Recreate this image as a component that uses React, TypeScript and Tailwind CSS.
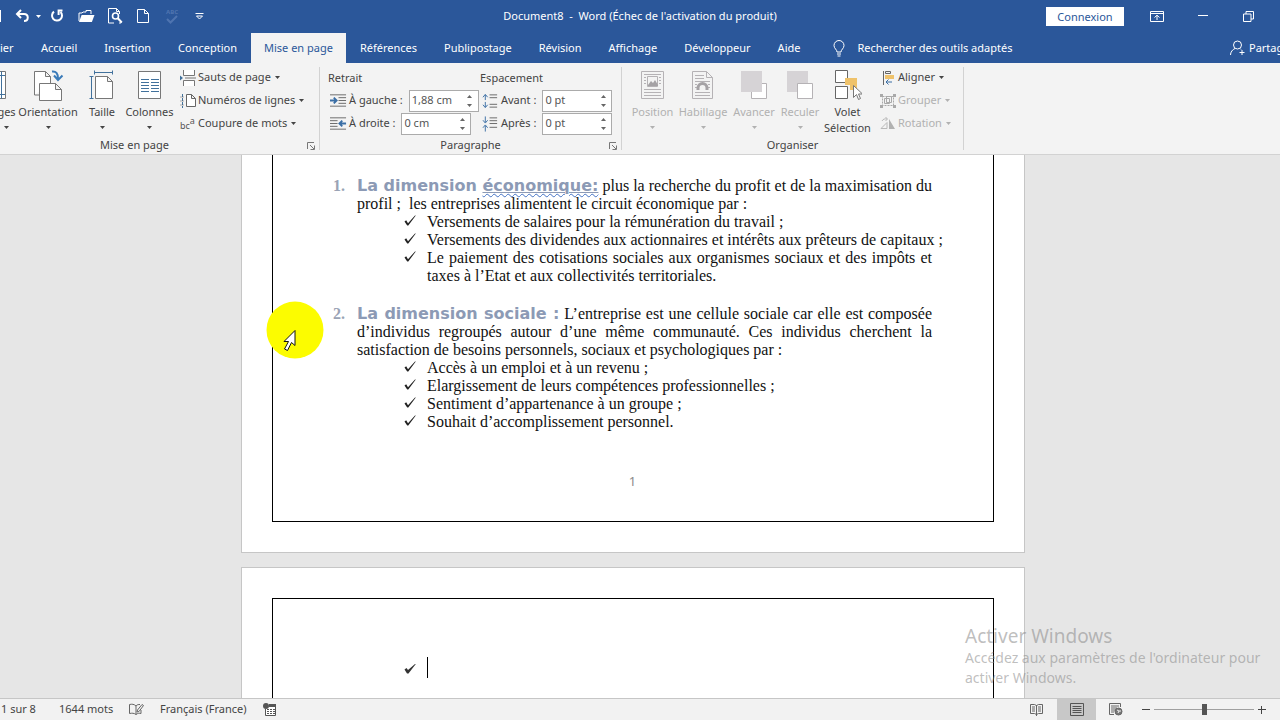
import { useState } from 'react';
import type { ReactNode } from 'react';

const TABS = [
  'Accueil',
  'Insertion',
  'Conception',
  'Mise en page',
  'Références',
  'Publipostage',
  'Révision',
  'Affichage',
  'Développeur',
  'Aide',
];

function Caret({ className = '' }: { className?: string }) {
  return (
    <svg viewBox="0 0 5 3" className={`h-[3px] w-[5px] shrink-0 fill-current ${className}`} aria-hidden="true">
      <path d="M0 0h5L2.5 3z" />
    </svg>
  );
}

/* ---------- Title bar ---------- */

function QuickAccess() {
  return (
    <div className="flex h-8 items-center text-white">
      <span className="h-3 w-px bg-white" />
      <button aria-label="Annuler" className="ml-[14px] flex items-center gap-[6px]">
        <svg viewBox="0 0 15 14" className="h-[14px] w-[15px] fill-none stroke-current stroke-2">
          <path d="M6 1 2 5l4 4M2 5h7c5 0 5 7 0 7" />
        </svg>
        <Caret />
      </button>
      <button aria-label="Rétablir" className="ml-[9px]">
        <svg viewBox="0 0 14 14" className="h-[14px] w-[14px] fill-none stroke-current stroke-2">
          <path d="M4 2.6A5 5 0 1 0 10.5 3M12.5 1.5H8.6v4.6" />
        </svg>
      </button>
      <button aria-label="Ouvrir" className="ml-[14px]">
        <svg viewBox="0 0 17 14" className="h-[14px] w-[17px]">
          <path d="M1 12V4h3l1-1h3V1.5h5V5" className="fill-none stroke-current" />
          <path d="M3.6 6H16.5l-2.6 7H1z" className="fill-current" />
        </svg>
      </button>
      <button aria-label="Aperçu" className="ml-[13px]">
        <svg viewBox="0 0 15 16" className="h-4 w-[15px] fill-none stroke-current">
          <path d="M6 15H.5V.5h8l3 3V6M8.5.5v3h3M13 13v2h-2" />
          <circle cx="7.5" cy="8" r="3" strokeWidth="1.6" />
          <path d="m9.8 10.3 4 4.2" strokeWidth="2" />
        </svg>
      </button>
      <button aria-label="Nouveau" className="ml-[14px]">
        <svg viewBox="0 0 12 14" className="h-[14px] w-3 fill-none stroke-current">
          <path d="M.5.5h7l4 4v9H.5zM7.5.5v4h4" />
        </svg>
      </button>
      <button aria-label="Grammaire" className="ml-4 text-[#4f74b0]">
        <span className="block text-[6px] leading-[6px] font-bold">ABC</span>
        <svg viewBox="0 0 14 9" className="h-[9px] w-[14px] fill-none stroke-current stroke-2">
          <path d="m2 4 3.5 3.5L12 1" />
        </svg>
      </button>
      <button aria-label="Personnaliser" className="ml-4">
        <svg viewBox="0 0 9 7" className="h-[7px] w-[9px] fill-none stroke-current">
          <path d="M.5.5h8M1.5 3l3 3 3-3z" />
        </svg>
      </button>
    </div>
  );
}

function TitleBar() {
  return (
    <div className="grid h-8 grid-cols-[1fr_auto_1fr] items-center text-white">
      <QuickAccess />
      <h1 className="text-[11px] whitespace-pre">Document8  -  Word (Échec de l'activation du produit)</h1>
      <div className="flex items-center justify-end pr-[26px]">
        <button className="h-[19px] w-[78px] bg-white text-[11px] leading-[19px] text-[#2b579a]">Connexion</button>
        <button aria-label="Options d'affichage du ruban" className="ml-[26px]">
          <svg viewBox="0 0 14 11" className="h-[11px] w-[14px] fill-none stroke-current">
            <path d="M.5.5h13v10H.5zM.5 2.5h13M7 9V4.5M4.5 6.5 7 4.2l2.5 2.3" />
          </svg>
        </button>
        <button aria-label="Réduire" className="ml-[34px]">
          <svg viewBox="0 0 10 10" className="h-[10px] w-[10px] stroke-current">
            <path d="M0 4.5h10" />
          </svg>
        </button>
        <button aria-label="Restaurer" className="ml-[35px]">
          <svg viewBox="0 0 11 11" className="h-[11px] w-[11px] fill-none stroke-current">
            <path d="M.5 3h7.5v7.5H.5zM3 3V.5h7.500V8H8" />
          </svg>
        </button>
      </div>
    </div>
  );
}

function TabBar({ active, onSelect }: { active: string; onSelect: (tab: string) => void }) {
  return (
    <div className="flex h-[31px] items-end overflow-hidden text-[11px] whitespace-nowrap text-white">
      <button className="h-[30px] w-7 text-left">ier</button>
      <div className="flex gap-px">
        {TABS.map(tab => (
          <button
            key={tab}
            onClick={() => onSelect(tab)}
            className={`h-[30px] px-[13px] ${tab === active ? 'bg-[#f3f3f3] text-[#2b579a]' : ''}`}
          >
            {tab}
          </button>
        ))}
      </div>
      <button className="ml-5 flex h-[30px] items-center gap-3">
        <svg viewBox="0 0 12 17" className="h-[17px] w-3 fill-none stroke-current">
          <path d="M4 12c0-2.500-3-3.500-3-6.500a5 5 0 0 1 10 0c0 3-3 4-3 6.500zM4 14h4M4.500 16h3" />
        </svg>
        Rechercher des outils adaptés
      </button>
      <button className="ml-auto flex h-[30px] items-center gap-1">
        <svg viewBox="0 0 15 16" className="h-4 w-[15px] fill-none stroke-current">
          <circle cx="7.500" cy="5" r="4" />
          <path d="M.5 15c0-3 2-5.500 4.500-6.500M10 8.500l1 1M12 10v5M9.500 12.500h5" />
        </svg>
        <span className="w-[31px] text-left">Partag</span>
      </button>
    </div>
  );
}

/* ---------- Ribbon ---------- */

function Group({ label, launcher, className, children }: { label: string; launcher?: boolean; className: string; children: ReactNode }) {
  return (
    <section className={`flex shrink-0 flex-col ${className}`}>
      <div className="flex h-[74px]">{children}</div>
      <div className="grid h-[17px] grid-cols-[1fr_auto_1fr] items-center text-[11px] text-[#444]">
        <span className="col-start-2">{label}</span>
        {launcher && (
          <button aria-label={`Options ${label}`} className="justify-self-end pr-1">
            <svg viewBox="0 0 8 8" className="h-2 w-2 fill-none stroke-[#777]">
              <path d="M.5 7V.5H7M3 3l4 4M7.500 3.500v4h-4" />
            </svg>
          </button>
        )}
      </div>
    </section>
  );
}

function Separator() {
  return <div className="my-1 w-px shrink-0 bg-[#d2d2d2]" />;
}

interface BigProps {
  label: string;
  secondLine?: string;
  icon: ReactNode;
  className: string;
  disabled?: boolean;
}

function BigButton({ label, secondLine, icon, className, disabled }: BigProps) {
  return (
    <button
      disabled={disabled}
      className={`flex shrink-0 flex-col items-center text-[11px] leading-4 whitespace-nowrap ${disabled ? 'text-[#b1b1b1]' : 'text-[#444]'} ${className}`}
    >
      <span className="mt-[6px] mb-[3px] flex h-8 items-center">{icon}</span>
      <span>{label}</span>
      {secondLine ? <span>{secondLine}</span> : <Caret className="mt-[6px]" />}
    </button>
  );
}

function SmallButton({ label, icon, disabled }: { label: string; icon: ReactNode; disabled?: boolean }) {
  return (
    <button
      disabled={disabled}
      className={`flex h-[23px] items-center text-[11px] whitespace-nowrap ${disabled ? 'text-[#b1b1b1]' : 'text-[#444]'}`}
    >
      {icon}
      <span className="mr-1 ml-[2px]">{label}</span>
      <Caret />
    </button>
  );
}

function SpinField({ id, label, icon, value }: { id: string; label: string; icon: ReactNode; value: string }) {
  const [text, setText] = useState(value);
  return (
    <div className="flex h-[23px] items-center text-[11px] text-[#444]">
      {icon}
      <label htmlFor={id} className="mr-[6px] ml-[2px] whitespace-nowrap">{label}</label>
      <div className="flex h-[22px] w-[70px] border border-[#ababab] bg-white">
        <input
          id={id}
          value={text}
          onChange={e => setText(e.target.value)}
          className="w-[52px] min-w-0 pl-[2px] text-[#555] outline-none"
        />
        <div className="flex flex-1 flex-col items-center justify-between py-1 text-[#666]">
          <button aria-label={`Augmenter ${label}`}>
            <Caret className="rotate-180" />
          </button>
          <button aria-label={`Diminuer ${label}`}>
            <Caret />
          </button>
        </div>
      </div>
    </div>
  );
}

function LayoutGroup() {
  return (
    /* the group starts beyond the left edge of the window */
    <Group label="Mise en page" launcher className="-ml-[50px] w-[369px]">
      <BigButton
        label="ges"
        className="ml-[50px] w-[13px]"
        icon={
          <svg viewBox="0 0 13 30" className="h-[30px] w-[13px] fill-white stroke-[#777]">
            <path d="M-5 1.500H5.500v27H-5" />
            <path d="M-5 5.500h10M-5 24.500h10M1.500 1.500v27" stroke="#41719c" />
          </svg>
        }
      />
      <BigButton
        label="Orientation"
        className="w-[70px]"
        icon={
          <svg viewBox="0 0 32 32" className="h-8 w-8 fill-white stroke-[#777]">
            <path d="M2.500 26V2.500h11l5 5V14M13.500 2.500v5h5M2.500 26H7" />
            <path d="M7.500 14.500h16l6 6v11h-22zM23.500 14.500v6h6" />
            <path d="M20 2.500c4-.5 6 2 6 7M22 6.500l4 4.500 4.500-4.500" className="fill-none stroke-[#3a7ab8] stroke-2" />
          </svg>
        }
      />
      <BigButton
        label="Taille"
        className="w-[38px]"
        icon={
          <svg viewBox="0 0 26 32" className="h-8 w-[26px] fill-white stroke-[#777]">
            <path d="M6.500 7.500h12l5 5v17h-17zM18.500 7.500v5h5" />
            <path d="M5 3.500h19M5.500 1.500v4M23.500 1.500v4M2.500 8v22M.5 7.500h4M.5 29.500h4" className="stroke-[#41719c]" />
          </svg>
        }
      />
      <BigButton
        label="Colonnes"
        className="w-[57px]"
        icon={
          <svg viewBox="0 0 24 30" className="h-[30px] w-6 fill-white stroke-[#777]">
            <path d="M.5 1.500h22v27H.5z" />
            <path
              d="M3 9.500h8M13 9.500h8M3 12.500h8M13 12.500h8M3 15.500h8M13 15.500h8M3 18.500h8M13 18.500h8M3 21.500h8M13 21.500h8"
              className="stroke-[#41719c]"
            />
          </svg>
        }
      />
      <div className="flex flex-col pt-[3px] pl-[2px]">
        <SmallButton
          label="Sauts de page"
          icon={
            <svg viewBox="0 0 16 16" className="h-4 w-4 fill-white stroke-[#777]">
              <path d="M3.500 0v5.500h11V0M3.500 16v-5.500h11V16" />
              <path d="M5 8h11" />
              <path d="M0 5.500 3 8l-3 2.500z" className="fill-[#41719c] stroke-none" />
            </svg>
          }
        />
        <SmallButton
          label="Numéros de lignes"
          icon={
            <svg viewBox="0 0 16 16" className="h-4 w-4 fill-white stroke-[#666]">
              <path d="M6.500 1.500h5l4 4v8h-9zM11.500 1.500v4h4" />
              <path d="M2.500 1v14" strokeDasharray="3 1" className="stroke-[#41719c]" />
              <path d="M.5 4h3M.5 8h3M.5 12h3" strokeDasharray="1 1" className="stroke-[#666]" />
            </svg>
          }
        />
        <SmallButton
          label="Coupure de mots"
          icon={
            <span className="flex h-4 w-4 text-[9px] text-[#555]">
              <span className="self-end leading-[12px]">bc</span>
              <span className="self-start leading-[10px]">a</span>
            </span>
          }
        />
      </div>
    </Group>
  );
}

function ParagraphGroup() {
  return (
    <Group label="Paragraphe" launcher className="w-[301px]">
      <div className="w-[160px] pt-[3px] pl-2">
        <div className="h-[23px] text-[11px] leading-[23px] text-[#444]">Retrait</div>
        <SpinField
          id="indent-left"
          label="À gauche :"
          value="1,88 cm"
          icon={
            <svg viewBox="0 0 18 13" className="ml-[2px] h-[13px] w-[17px] fill-none stroke-[#666]">
              <path d="M0 .5h17M9 3.500h8M9 6.500h8M9 9.500h8M0 12.500h17" />
              <path d="M0 6.500h6M4 3.500l3 3-3 3" className="stroke-[#3a6ea5] stroke-2" />
            </svg>
          }
        />
        <SpinField
          id="indent-right"
          label="À droite :"
          value="0 cm"
          icon={
            <svg viewBox="0 0 18 13" className="ml-[2px] h-[13px] w-[17px] fill-none stroke-[#666]">
              <path d="M0 .5h17M0 3.500h8M0 6.500h8M0 9.500h8M0 12.500h17" />
              <path d="M17 6.500h-6M13 3.500l-3 3 3 3" className="stroke-[#3a6ea5] stroke-2" />
            </svg>
          }
        />
      </div>
      <div className="pt-[3px]">
        <div className="h-[23px] text-[11px] leading-[23px] text-[#444]">Espacement</div>
        <SpinField
          id="space-before"
          label="Avant :"
          value="0 pt"
          icon={
            <svg viewBox="0 0 18 16" className="ml-[2px] h-4 w-[17px] fill-none stroke-[#666]">
              <path d="M8 1.500h8M8 4.500h8M8 11.500h8M8 14.500h8" />
              <path d="M3.500 7V1.500M1 4l2.500-3L6 4M3.500 9v5.500M1 12l2.500 3L6 12" className="stroke-[#3a6ea5]" />
            </svg>
          }
        />
        <SpinField
          id="space-after"
          label="Après :"
          value="0 pt"
          icon={
            <svg viewBox="0 0 18 16" className="ml-[2px] h-4 w-[17px] fill-none stroke-[#666]">
              <path d="M8 1.500h8M8 4.500h8M8 7.500h8M8 11.500h8" />
              <path d="M3.500 0v6M1 4l2.500 3L6 4M3.500 16v-6M1 12l2.500-3L6 12" className="stroke-[#3a6ea5]" />
            </svg>
          }
        />
      </div>
    </Group>
  );
}

function ArrangeGroup() {
  return (
    <Group label="Organiser" className="w-[341px]">
      <BigButton
        label="Position"
        disabled
        className="w-[61px]"
        icon={
          <svg viewBox="0 0 24 30" className="h-[30px] w-6 fill-none stroke-[#b5b2b5]">
            <path d="M.5 1.500h22v27H.5zM3 4.500h17M3 7.500h2M18 7.500h2M3 10.500h2M18 10.500h2M3 13.500h2M18 13.500h2M3 19.500h17M3 22.500h17M3 25.500h17" />
            <path d="M6.500 6.500h10v10h-10z" />
            <path d="m7 15 3-4 2 2 2-3 3 5v1H7z" className="fill-[#a5a2a5] stroke-none" />
          </svg>
        }
      />
      <BigButton
        label="Habillage"
        disabled
        className="w-[40px]"
        icon={
          <svg viewBox="0 0 22 30" className="h-[30px] w-[22px] fill-none stroke-[#b5b2b5]">
            <path d="M.5 1.500h14l6 6v21H.5zM14.500 1.500v6h6M3 5.500h9M3 8.500h9M3 11.500h15M3 14.500h2M16 14.500h2M3 17.500h2M16 17.500h2M3 22.500h15M3 25.500h15" />
            <path d="M6 20v-2a4.500 4.500 0 0 1 9 0v2" className="stroke-[#a5a2a5] stroke-[3px]" />
          </svg>
        }
      />
      <BigButton
        label="Avancer"
        disabled
        className="w-[62px]"
        icon={
          <svg viewBox="0 0 28 30" className="h-[30px] w-7 fill-white stroke-[#b5b2b5]">
            <path d="M11.500 13.500h15v15h-15z" />
            <path d="M1 1h21v21H1z" className="fill-[#d6d3d6] stroke-none" />
          </svg>
        }
      />
      <BigButton
        label="Reculer"
        disabled
        className="w-[30px]"
        icon={
          <svg viewBox="0 0 28 30" className="h-[30px] w-7 fill-white stroke-[#b5b2b5]">
            <path d="M1 1h21v21H1z" className="fill-[#d6d3d6] stroke-none" />
            <path d="M11.500 13.500h15v15h-15z" />
          </svg>
        }
      />
      <BigButton
        label="Volet"
        secondLine="Sélection"
        className="w-[65px]"
        icon={
          <svg viewBox="0 0 28 30" className="h-[30px] w-7 fill-white stroke-[#666]">
            <path d="M1.500.5h12v12h-12zM1.500 16.500h12v12h-12z" />
            <path d="M11 8h12v12h-7v-5h-5z" className="fill-[#efc26a] stroke-none" />
            <path d="M19.500 15.500v12l3-3 2 5 2-1-2-4.500h4z" className="stroke-[#777]" />
          </svg>
        }
      />
      <div className="flex flex-col pt-[3px]">
        <SmallButton
          label="Aligner"
          icon={
            <svg viewBox="0 0 16 14" className="h-[14px] w-4 fill-none stroke-[#666]">
              <path d="M3.500 0v14M5.500.5h5v2h-5z" />
              <path d="M5 4h9v4H5z" className="fill-[#efc26a] stroke-none" />
              <path d="M6 11h6M8.500 8.500 6 11l2.500 2.500" className="stroke-[#3a6ea5]" />
            </svg>
          }
        />
        <SmallButton
          label="Grouper"
          disabled
          icon={
            <svg viewBox="0 0 16 14" className="h-[14px] w-4 fill-none stroke-[#a9a9a9]">
              <path d="M2.500 2.500h11v9h-11z" strokeDasharray="2 1" />
              <path d="M4.500 4.500h5v5h-5zM6.500 2.500h5v6h-5z" />
              <path d="M0 0h3v3H0zM13 0h3v3h-3zM0 11h3v3H0zM13 11h3v3h-3z" className="fill-[#a9a9a9] stroke-none" />
            </svg>
          }
        />
        <SmallButton
          label="Rotation"
          disabled
          icon={
            <svg viewBox="0 0 16 14" className="h-[14px] w-4 fill-none stroke-[#b9b9b9]">
              <path d="M1 11.500h6v-6z" />
              <path d="M9 2v10h6z" className="fill-[#b1b1b1] stroke-none" />
              <path d="M2 4c1-2 3-2.500 5-2M5.500 0 7.500 2l-2 2" />
            </svg>
          }
        />
      </div>
    </Group>
  );
}

function Ribbon() {
  return (
    <div className="flex h-[92px] overflow-hidden border-b border-[#d2d2d2] bg-[#f3f3f3]">
      <LayoutGroup />
      <Separator />
      <ParagraphGroup />
      <Separator />
      <ArrangeGroup />
      <Separator />
    </div>
  );
}

/* ---------- Document ---------- */

function Line({ full, children }: { full?: boolean; children: ReactNode }) {
  return <span className={`block h-[18px] whitespace-nowrap ${full ? '[text-align-last:justify]' : ''}`}>{children}</span>;
}

function Bullet({ children }: { children?: ReactNode }) {
  return (
    <li className="flex">
      <svg viewBox="0 0 12 12" className="mt-px mr-[11px] h-3 w-3 shrink-0 fill-[#222]" aria-hidden="true">
        <path d="M.5 7.500 2.200 6.300 4 9.200 11 1.500h.8L4.300 11.500H3.200z" />
      </svg>
      <div className="min-w-0 flex-1">{children}</div>
    </li>
  );
}

function Heading({ children }: { children: ReactNode }) {
  return <strong className="font-['DejaVu_Sans'] text-[16px] leading-none font-bold text-[#8c9ab5]">{children}</strong>;
}

function Item({ number, children }: { number: string; children: ReactNode }) {
  return (
    <li className="flex">
      <span className="w-6 shrink-0 font-bold text-[#9aa3b5]">{number}</span>
      <div className="min-w-0 flex-1">{children}</div>
    </li>
  );
}

function FirstPage() {
  return (
    <article className="w-full max-w-[784px] border-x border-b border-[#c6c6c6] bg-white px-[30px] pb-[30px]">
      <div className="border-x border-b border-black pt-[22px] pr-[61px] pb-[31px] pl-[60px]">
        <ol className="space-y-5">
          <Item number="1.">
            <Line full>
              <Heading>
                La dimension{' '}
                <span className="underline decoration-1 underline-offset-1">
                  <span className="underline decoration-[#4472c4] decoration-wavy decoration-1 underline-offset-2">économique:</span>
                </span>
              </Heading>{' '}
              plus la recherche du profit et de la maximisation du
            </Line>
            <Line>profil ;&nbsp; les entreprises alimentent le circuit économique par :</Line>
            <ul className="pl-[47px]">
              <Bullet>
                <Line>Versements de salaires pour la rémunération du travail ;</Line>
              </Bullet>
              <Bullet>
                <Line full>Versements des dividendes aux actionnaires et intérêts aux prêteurs de capitaux ;</Line>
              </Bullet>
              <Bullet>
                <Line full>Le paiement des cotisations sociales aux organismes sociaux et des impôts et</Line>
                <Line>taxes à l’Etat et aux collectivités territoriales.</Line>
              </Bullet>
            </ul>
          </Item>
          <Item number="2.">
            <Line full>
              <Heading>La dimension sociale :</Heading> L’entreprise est une cellule sociale car elle est composée
            </Line>
            <Line full>d’individus regroupés autour d’une même communauté. Ces individus cherchent la</Line>
            <Line>satisfaction de besoins personnels, sociaux et psychologiques par :</Line>
            <ul className="pl-[47px]">
              <Bullet>
                <Line>Accès à un emploi et à un revenu ;</Line>
              </Bullet>
              <Bullet>
                <Line>Elargissement de leurs compétences professionnelles ;</Line>
              </Bullet>
              <Bullet>
                <Line>Sentiment d’appartenance à un groupe ;</Line>
              </Bullet>
              <Bullet>
                <Line>Souhait d’accomplissement personnel.</Line>
              </Bullet>
            </ul>
          </Item>
        </ol>
        <p className="mt-[41px] text-center font-['Noto_Sans'] text-[13px] text-[#8a8a8a]">1</p>
      </div>
    </article>
  );
}

function SecondPage() {
  return (
    <article className="mt-[14px] w-full max-w-[784px] border border-b-0 border-[#c6c6c6] bg-white px-[30px] pt-[30px]">
      <div className="h-[110px] border-x border-t border-black pt-[58px] pl-[131px]">
        <ul>
          <li className="flex">
            <svg viewBox="0 0 12 12" className="mt-[5px] mr-[11px] h-3 w-3 fill-[#333]" aria-hidden="true">
              <path d="M.5 7.500 2.500 6 4 8 11 2h.8L4.500 11.500H3z" />
            </svg>
            <span className="h-[21px] w-px bg-black" />
          </li>
        </ul>
      </div>
    </article>
  );
}

function Pointer() {
  return (
    <div className="absolute top-[146px] left-[266px]">
      <svg viewBox="0 0 58 58" className="h-[58px] w-[58px]" aria-hidden="true">
        <circle cx="29" cy="29" r="28.500" fill="#fcfc00" />
        <path d="M29 29.500v15l-3.500-3-4 8-3-1.500 4-7.500h-4.500z" fill="#fff" stroke="#111" />
      </svg>
    </div>
  );
}

function Watermark() {
  return (
    <div className="pointer-events-none absolute right-0 bottom-[10px] w-[315px] text-[#888]/55">
      <p className="text-[19px] leading-6">Activer Windows</p>
      <p className="text-[14px] leading-5">
        Accédez aux paramètres de l'ordinateur pour
        <br />
        activer Windows.
      </p>
    </div>
  );
}

/* ---------- Status bar ---------- */

function StatusBar() {
  const [zoom, setZoom] = useState(50);
  return (
    <footer className="flex h-[22px] shrink-0 items-center border-t border-[#c6c6c6] bg-[#f2f2f2] text-[11px] whitespace-nowrap text-[#444]">
      <span className="w-[59px] pl-px">1 sur 8</span>
      <span className="w-[70px]">1644 mots</span>
      <button aria-label="Vérification" className="mr-4">
        <svg viewBox="0 0 15 13" className="h-[13px] w-[15px] fill-none stroke-[#666]">
          <path d="M7 3v8.500M7 3C5 1 3 1 .5 1.500v9c2.500-.5 4.500-.5 6.500 1 2-1.500 3.500-1.500 5-1V7M7 3c1-1.500 2.500-1.500 4-1.500" />
          <path d="m8 9 .5-2L13 1.500l1.500 1L10 8.500z" />
        </svg>
      </button>
      <span>Français (France)</span>
      <button aria-label="Macro" className="ml-4">
        <svg viewBox="0 0 14 13" className="h-[13px] w-[14px]">
          <path d="M2.500 6v6.500h10V2.500H7" fill="#fff" stroke="#555" />
          <path d="M6 1h7v3H6zM4 6h2v1H4zM7 6h2v1H7zM10 6h2v1h-2zM4 8h2v1H4zM7 8h2v1H7zM10 8h2v1h-2zM4 10h2v1H4zM7 10h2v1H7zM10 10h2v1h-2z" fill="#555" />
          <circle cx="3" cy="3" r="3" fill="#555" />
        </svg>
      </button>
      <div className="ml-auto flex h-full items-center pr-[14px]">
        <button aria-label="Mode lecture" className="mr-[14px]">
          <svg viewBox="0 0 13 13" className="h-[13px] w-[13px] fill-none stroke-[#666]">
            <path d="M6.500 2v11M.5 1.500h4l2 1 2-1h4v9h-4l-2 1-2-1h-4zM2 4h3M8 4h3M2 6h3M8 6h3M2 8h3M8 8h3" />
          </svg>
        </button>
        <button aria-label="Page" className="flex h-full w-[39px] items-center justify-center bg-[#c8c8c8]">
          <svg viewBox="0 0 14 13" className="h-[13px] w-[14px] fill-none stroke-[#555]">
            <path d="M.5.5h13v12H.5zM2.500 3.500h9M2.500 5.500h9M2.500 7.500h9M2.500 9.500h9" />
          </svg>
        </button>
        <button aria-label="Web" className="ml-[13px]">
          <svg viewBox="0 0 14 13" className="h-[13px] w-[14px] fill-none stroke-[#666]">
            <path d="M5 11.500H.5V.5h11V4M2 3h8M2 5h6M2 7h4M2 9h3" />
            <circle cx="9.500" cy="8.500" r="3.500" fill="#777" />
            <path d="m8 7 2 1-1 2M11 7v2" stroke="#f2f2f2" />
          </svg>
        </button>
        <button aria-label="Zoom arrière" className="ml-[19px]">
          <svg viewBox="0 0 8 8" className="h-2 w-2 stroke-[#444]">
            <path d="M0 3.500h8" />
          </svg>
        </button>
        <input
          type="range"
          aria-label="Zoom"
          value={zoom}
          onChange={e => setZoom(Number(e.target.value))}
          className="mx-1 h-3 w-[100px] appearance-none bg-transparent [&::-webkit-slider-runnable-track]:h-px [&::-webkit-slider-runnable-track]:bg-[#a0a0a0] [&::-webkit-slider-thumb]:-mt-[5px] [&::-webkit-slider-thumb]:h-[11px] [&::-webkit-slider-thumb]:w-[5px] [&::-webkit-slider-thumb]:appearance-none [&::-webkit-slider-thumb]:bg-[#555]"
        />
        <button aria-label="Zoom avant">
          <svg viewBox="0 0 8 8" className="h-2 w-2 stroke-[#444]">
            <path d="M0 3.500h8M3.500 0v8" />
          </svg>
        </button>
      </div>
    </footer>
  );
}

export default function App() {
  const [tab, setTab] = useState('Mise en page');

  return (
    <div className="flex h-screen flex-col overflow-hidden bg-[#e6e6e6] font-['Noto_Sans',sans-serif]">
      <header className="shrink-0 bg-[#2b579a]">
        <TitleBar />
        <TabBar active={tab} onSelect={setTab} />
        <Ribbon />
      </header>
      <main className="relative min-h-0 flex-1 overflow-hidden">
        <div className="flex flex-col items-center pr-[14px] font-['Liberation_Serif',serif] text-[16px] leading-[18px] text-[#111]">
          <FirstPage />
          <SecondPage />
        </div>
        <Pointer />
        <Watermark />
      </main>
      <StatusBar />
    </div>
  );
}
